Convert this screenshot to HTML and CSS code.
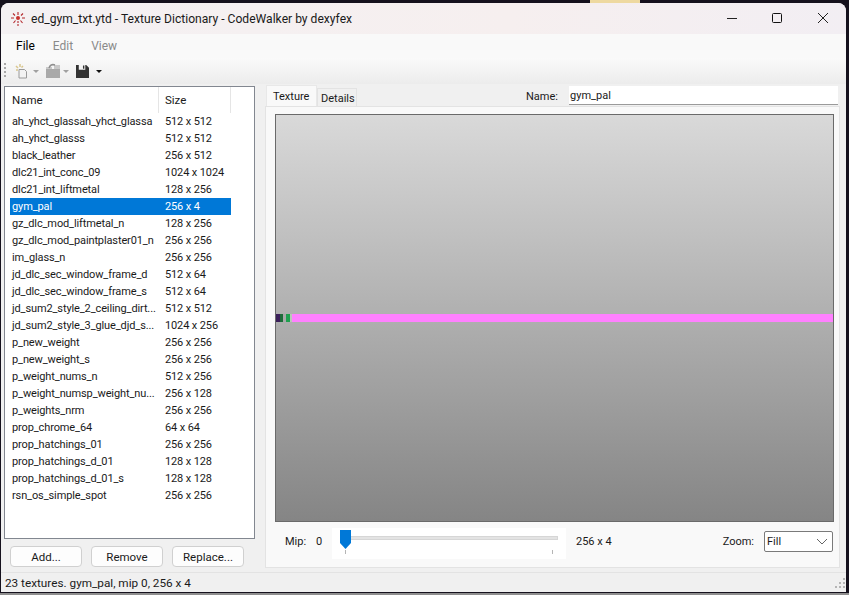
FILE: index.html
```html
<!DOCTYPE html>
<html lang="en">
<head>
    <meta charset="UTF-8">
    <meta name="viewport" content="width=device-width, initial-scale=1.0">
    <title>Texture Dictionary - CodeWalker</title>
    <link rel="stylesheet" href="styles.css">
</head>
<body>
    <div class="wallpaper-bit"></div>
    <div class="window">
        <div class="titlebar">
            <svg class="app-icon" width="16" height="16" viewBox="0 0 16 16">
                <g stroke="#b3262a" stroke-width="1.100" fill="none">
                    <path d="M8 1v3M8 10v2M8 13v2M1 7h3M12 7h3M3 2.500l2 2M13 2.500l-2 2M3.500 12l2-2.500M12.500 12l-2-2.500"/>
                </g>
                <circle cx="8" cy="7" r="2" fill="#c8322f"/>
            </svg>
            <span class="title-text">ed_gym_txt.ytd - Texture Dictionary - CodeWalker by dexyfex</span>
            <div class="window-buttons">
                <svg width="46" height="31" viewBox="0 0 46 31"><path d="M19 15.500h10" stroke="#222" fill="none"/></svg>
                <svg width="46" height="31" viewBox="0 0 46 31"><rect x="18.500" y="10.500" width="9" height="9" rx="1" stroke="#111" fill="none"/></svg>
                <svg width="46" height="31" viewBox="0 0 46 31"><path d="M18 10l10 10M28 10l-10 10" stroke="#222" fill="none"/></svg>
            </div>
        </div>

        <div class="menubar">
            <span class="menu-item">File</span>
            <span class="menu-item disabled">Edit</span>
            <span class="menu-item disabled">View</span>
        </div>

        <div class="toolbar">
            <span class="grip"></span>
            <svg class="tool-icon" width="16" height="16" viewBox="0 0 16 16">
                <path d="M6 6.500h5.500l2 2V15H6z" fill="#f2f2f2" stroke="#9a9a9a"/>
                <path d="M3 3l2 2M7 1v3M3 7h2M10 3L8.500 4.500" stroke="#d9c68e" stroke-width="1.500"/>
            </svg>
            <span class="caret disabled"></span>
            <svg class="tool-icon folder" width="16" height="16" viewBox="0 0 16 16">
                <path d="M1 6h14v9H1z" fill="#a9a9a9"/>
                <path d="M1 4h6v2H1zM9 2h6v4H9z" fill="#c9c9c9"/>
                <path d="M4 5c1-3 3-4 6-3" stroke="#8f8f8f" stroke-width="1.500" fill="none"/>
            </svg>
            <span class="caret disabled"></span>
            <svg class="tool-icon save" width="13" height="13" viewBox="0 0 14 14">
                <path d="M0 0h11l3 3v11H0z" fill="#333"/>
                <path d="M3 0h7v5H3z" fill="#f4f4f4"/>
                <path d="M7.500 .5h1.500v3.500H7.500z" fill="#333"/>
            </svg>
            <span class="caret"></span>
        </div>

        <div class="main">
            <div class="left-pane">
                <div class="listbox">
                    <div class="list-head">
                        <span class="col-name">Name</span>
                        <span class="col-size">Size</span>
                    </div>
                    <div class="list-row"><span class="col-name">ah_yhct_glassah_yhct_glassa</span><span class="col-size">512 x 512</span></div>
                    <div class="list-row"><span class="col-name">ah_yhct_glasss</span><span class="col-size">512 x 512</span></div>
                    <div class="list-row"><span class="col-name">black_leather</span><span class="col-size">256 x 512</span></div>
                    <div class="list-row"><span class="col-name">dlc21_int_conc_09</span><span class="col-size">1024 x 1024</span></div>
                    <div class="list-row"><span class="col-name">dlc21_int_liftmetal</span><span class="col-size">128 x 256</span></div>
                    <div class="list-row selected"><span class="col-name">gym_pal</span><span class="col-size">256 x 4</span></div>
                    <div class="list-row"><span class="col-name">gz_dlc_mod_liftmetal_n</span><span class="col-size">128 x 256</span></div>
                    <div class="list-row"><span class="col-name">gz_dlc_mod_paintplaster01_n</span><span class="col-size">256 x 256</span></div>
                    <div class="list-row"><span class="col-name">im_glass_n</span><span class="col-size">256 x 256</span></div>
                    <div class="list-row"><span class="col-name">jd_dlc_sec_window_frame_d</span><span class="col-size">512 x 64</span></div>
                    <div class="list-row"><span class="col-name">jd_dlc_sec_window_frame_s</span><span class="col-size">512 x 64</span></div>
                    <div class="list-row"><span class="col-name">jd_sum2_style_2_ceiling_dirt...</span><span class="col-size">512 x 512</span></div>
                    <div class="list-row"><span class="col-name">jd_sum2_style_3_glue_djd_s...</span><span class="col-size">1024 x 256</span></div>
                    <div class="list-row"><span class="col-name">p_new_weight</span><span class="col-size">256 x 256</span></div>
                    <div class="list-row"><span class="col-name">p_new_weight_s</span><span class="col-size">256 x 256</span></div>
                    <div class="list-row"><span class="col-name">p_weight_nums_n</span><span class="col-size">512 x 256</span></div>
                    <div class="list-row"><span class="col-name">p_weight_numsp_weight_nu...</span><span class="col-size">256 x 128</span></div>
                    <div class="list-row"><span class="col-name">p_weights_nrm</span><span class="col-size">256 x 256</span></div>
                    <div class="list-row"><span class="col-name">prop_chrome_64</span><span class="col-size">64 x 64</span></div>
                    <div class="list-row"><span class="col-name">prop_hatchings_01</span><span class="col-size">256 x 256</span></div>
                    <div class="list-row"><span class="col-name">prop_hatchings_d_01</span><span class="col-size">128 x 128</span></div>
                    <div class="list-row"><span class="col-name">prop_hatchings_d_01_s</span><span class="col-size">128 x 128</span></div>
                    <div class="list-row"><span class="col-name">rsn_os_simple_spot</span><span class="col-size">256 x 256</span></div>
                </div>
                <div class="button-row">
                    <button class="btn">Add...</button>
                    <button class="btn">Remove</button>
                    <button class="btn">Replace...</button>
                </div>
            </div>

            <div class="right-pane">
                <div class="tab-row">
                    <span class="tab active">Texture</span>
                    <span class="tab">Details</span>
                    <label class="name-label">Name:</label>
                    <div class="name-input">gym_pal</div>
                </div>
                <div class="tab-panel">
                    <div class="preview">
                        <div class="texture-strip">
                            <span class="seg-a"></span>
                            <span class="seg-b"></span>
                            <span class="seg-c"></span>
                            <span class="seg-d"></span>
                            <span class="seg-e"></span>
                            <span class="seg-f"></span>
                        </div>
                    </div>
                    <div class="controls">
                        <span class="mip-label">Mip:</span>
                        <span class="mip-value">0</span>
                        <div class="slider">
                            <div class="track"></div>
                            <div class="ticks"><i></i><i></i></div>
                            <svg class="thumb" width="11" height="19" viewBox="0 0 11 19"><path d="M0 0h11v13l-5.500 6L0 13z" fill="#0078d7"/></svg>
                        </div>
                        <span class="mip-size">256 x 4</span>
                        <span class="zoom-label">Zoom:</span>
                        <div class="select">
                            <span>Fill</span>
                            <svg width="12" height="7" viewBox="0 0 12 7"><path d="M1 1l5 5 5-5" stroke="#666" fill="none"/></svg>
                        </div>
                    </div>
                </div>
            </div>
        </div>

        <div class="statusbar">
            <span>23 textures. gym_pal, mip 0, 256 x 4</span>
            <svg class="resize-grip" width="12" height="12" viewBox="0 0 12 12">
                <path d="M9 1h2v2H9zM5 5h2v2H5zM9 5h2v2H9zM1 9h2v2H1zM5 9h2v2H5zM9 9h2v2H9z" fill="#b5b5b5"/>
            </svg>
        </div>
    </div>
    <div class="taskbar-bit"></div>
</body>
</html>
```

FILE: styles.css
```css
* {
    box-sizing: border-box;
}

html, body {
    height: 100%;
}

body {
    margin: 0;
    padding: 3px 3px 3px 1px;
    background: #15111d;
    font-family: 'Roboto', 'Liberation Sans', sans-serif;
    font-size: 11.5px;
    color: #1a1a1a;
    overflow: hidden;
}

.wallpaper-bit {
    position: absolute;
    left: 590px;
    top: 0;
    width: 50px;
    height: 3px;
    background: #eed9a0;
}

.taskbar-bit {
    position: absolute;
    left: 0;
    right: 0;
    bottom: 0;
    height: 2px;
    background: #8e8e8e;
}

.window {
    height: 100%;
    display: flex;
    flex-direction: column;
    background: #f9f9f9;
    border-radius: 8px 8px 0 0;
    overflow: hidden;
}

.titlebar {
    height: 31px;
    display: flex;
    align-items: center;
    padding-left: 9px;
    background: linear-gradient(to right, #f4f1f3, #f6efef 60%, #f2eef3);
    flex: none;
}

.app-icon {
    margin-right: 5px;
}

.title-text {
    font-size: 12.1px;
}

.window-buttons {
    margin-left: auto;
    display: flex;
}

.menubar {
    height: 24px;
    display: flex;
    align-items: center;
    padding-left: 15px;
    gap: 18px;
    font-size: 12px;
    flex: none;
}

.menu-item {
    color: #000;
}

.menu-item.disabled {
    color: #8a8a8a;
}

.toolbar {
    height: 26px;
    display: flex;
    align-items: center;
    padding-left: 3px;
    background: linear-gradient(to bottom, #fafafa, #ececec);
    flex: none;
}

.grip {
    width: 2px;
    height: 16px;
    margin-right: 7px;
    background: repeating-linear-gradient(to bottom, #a8a8a8 0 2px, transparent 2px 4px);
}

.tool-icon {
    margin-right: 2px;
}

.tool-icon.folder {
    margin-right: 0;
}

.tool-icon.save {
    margin-left: 1px;
    margin-right: 5px;
}

.caret {
    width: 0;
    height: 0;
    margin: 0 6px 0 2px;
    border-left: 3px solid transparent;
    border-right: 3px solid transparent;
    border-top: 3px solid #111;
}

.caret.disabled {
    border-top-color: #a0a0a0;
}

.main {
    flex: 1;
    display: flex;
    background: #f0f0f0;
    min-height: 0;
}

.left-pane {
    width: 261px;
    padding: 2px 0 0 3px;
    flex: none;
}

.listbox {
    width: 251px;
    height: 453px;
    background: #fff;
    border: 1px solid #828790;
    padding-left: 1px;
}

.list-head {
    height: 26px;
    display: flex;
    align-items: center;
}

.list-head .col-name {
    width: 153px;
    height: 100%;
    line-height: 26px;
    border-right: 1px solid #e5e5e5;
    padding-left: 6px;
}

.list-head .col-size {
    width: 72px;
    height: 100%;
    line-height: 26px;
    border-right: 1px solid #e5e5e5;
    padding-left: 6px;
}

.list-row {
    height: 17px;
    width: 221px;
    margin-left: 4px;
    display: flex;
    align-items: center;
    line-height: 17px;
    font-size: 11px;
    letter-spacing: -0.12px;
}

.list-row .col-name {
    width: 155px;
    padding-left: 2px;
    white-space: nowrap;
    overflow: hidden;
}

.list-row .col-size {
    white-space: nowrap;
}

.list-row.selected {
    background: #0078d7;
    color: #fff;
}

.button-row {
    display: flex;
    gap: 9px;
    margin-top: 7px;
    padding-left: 6px;
}

.btn {
    width: 72px;
    height: 21px;
    padding: 0;
    background: #fdfdfd;
    border: 1px solid #d0d0d0;
    border-radius: 4px;
    font: inherit;
    color: inherit;
}

.right-pane {
    flex: 1;
    padding: 2px 6px 0 3px;
    min-width: 0;
}

.tab-row {
    height: 20px;
    display: flex;
    align-items: flex-end;
    padding: 0 2px 0 1px;
    font-size: 11px;
}

.tab {
    width: 40px;
    height: 18px;
    line-height: 20px;
    padding: 0 3px;
    background: #f0f0f0;
    border: 1px solid #e3e3e3;
    border-bottom: 0;
}

.tab.active {
    height: 21px;
    line-height: 21px;
    width: 51px;
    padding: 0 6px;
    background: #f9f9f9;
    border-color: #e8e8e8;
}

.name-label {
    margin-left: auto;
    align-self: center;
    margin-right: 11px;
}

.name-input {
    width: 269px;
    height: 19px;
    align-self: flex-start;
    line-height: 20px;
    padding-left: 1px;
    background: #fff;
    border-bottom: 1px solid #9a9a9a;
}

.tab-panel {
    height: 462px;
    padding: 7px 6px 0 10px;
    background: #f9f9f9;
    border: 1px solid #e3e3e3;
}

.preview {
    height: 408px;
    display: flex;
    flex-direction: column;
    justify-content: center;
    background: linear-gradient(to bottom, #d9d9d9, #858585);
    border: 1px solid #6a6a6a;
    margin: 0 -1px;
}

.texture-strip {
    height: 8px;
    display: flex;
}

.seg-a {
    width: 4px;
    background: #3b1f5a;
}

.seg-b {
    width: 3px;
    background: #1e6b3a;
}

.seg-c {
    width: 3px;
    background: #a9a9a9;
}

.seg-d {
    width: 4px;
    background: #1fa050;
}

.seg-e {
    width: 2px;
    background: #b9c9b9;
}

.seg-f {
    flex: 1;
    background: #ff80ff;
}

.controls {
    height: 39px;
    display: flex;
    align-items: center;
    padding-left: 9px;
    font-size: 11px;
}

.mip-label {
    width: 31px;
}

.mip-value {
    width: 16px;
}

.slider {
    position: relative;
    width: 234px;
    height: 31px;
    align-self: flex-start;
    margin-top: 6px;
    padding: 8px 8px 0;
    background: #fff;
}

.track {
    height: 4px;
    background: #e3e3e3;
    border: 1px solid #d6d6d6;
}

.ticks {
    display: flex;
    justify-content: space-between;
    padding: 10px 5px 0;
}

.ticks i {
    width: 1px;
    height: 4px;
    background: #b5b5b5;
}

.thumb {
    position: absolute;
    left: 8px;
    top: 2px;
}

.mip-size {
    margin-left: 10px;
}

.zoom-label {
    margin-left: auto;
    margin-right: 10px;
}

.select {
    width: 69px;
    height: 21px;
    display: flex;
    align-items: center;
    justify-content: space-between;
    padding: 0 4px 0 2px;
    background: #fff;
    border: 1px solid #7a7a7a;
    border-radius: 2px;
}

.statusbar {
    height: 20px;
    flex: none;
    display: flex;
    align-items: center;
    justify-content: space-between;
    padding-left: 4px;
    font-size: 11.75px;
    background: #f0f0f0;
    border-top: 1px solid #e3e3e3;
}
```
